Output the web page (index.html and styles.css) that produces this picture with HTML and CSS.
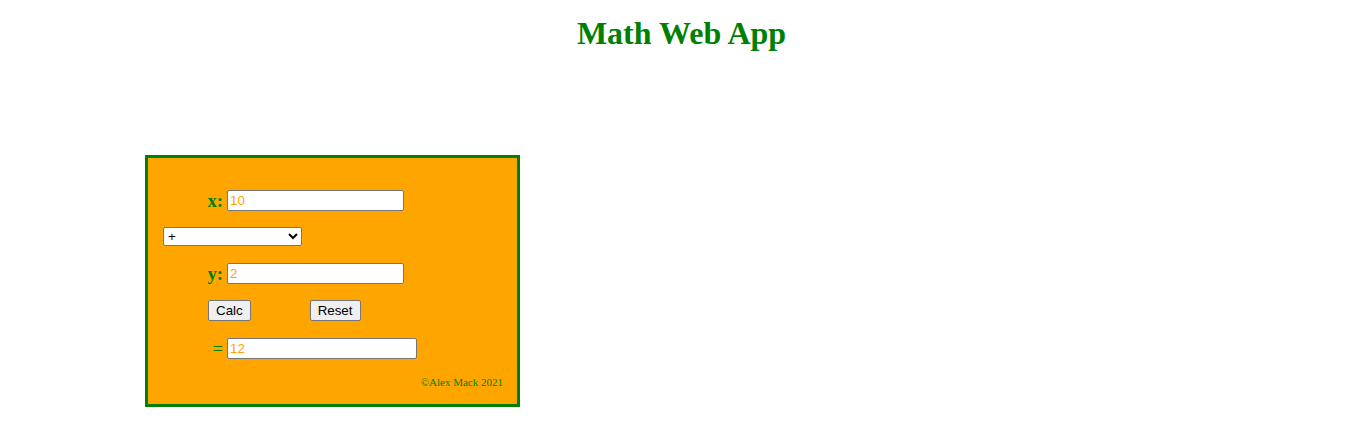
FILE: index.html
```html
<!DOCTYPE html>
<html lang="en">
<head>
  <meta charset="UTF-8">
  <title>Math Web App</title>
  <link rel="stylesheet" href="styles.css">
</head>
<body>

  <h1>Math Web App</h1>

  <div class="calc">
    <div class="fila">
      <label class="etiqueta" for="x">x:</label>
      <input type="text" id="x" class="campo" value="10">
    </div>

    <div class="fila fila-op">
      <select id="op" class="operacion">
        <option>+</option>
        <option>-</option>
        <option>*</option>
        <option>/</option>
      </select>
    </div>

    <div class="fila">
      <label class="etiqueta" for="y">y:</label>
      <input type="text" id="y" class="campo" value="2">
    </div>

    <div class="fila fila-botones">
      <button id="calc">Calc</button>
      <button id="reset">Reset</button>
    </div>

    <div class="fila fila-res">
      <label class="etiqueta igual" for="res">=</label>
      <input type="text" id="res" class="campo resultado" value="12">
    </div>

    <p class="copy">&copy;Alex Mack 2021</p>
  </div>

  <script>
    const x = document.getElementById("x");
    const y = document.getElementById("y");
    const op = document.getElementById("op");
    const res = document.getElementById("res");

    document.getElementById("calc").addEventListener("click", () => {
      const a = parseFloat(x.value);
      const b = parseFloat(y.value);
      let r = 0;
      if (op.value === "+") r = a + b;
      if (op.value === "-") r = a - b;
      if (op.value === "*") r = a * b;
      if (op.value === "/") r = a / b;
      res.value = r;
    });

    document.getElementById("reset").addEventListener("click", () => {
      x.value = "";
      y.value = "";
      res.value = "";
    });
  </script>

</body>
</html>
```

FILE: styles.css
```css
body {
  margin: 0;
  font-family: "Liberation Serif", "Times New Roman", serif;
  background: #ffffff;
}

h1 {
  margin: 15px 0 0;
  line-height: 37px;
  font-size: 32px;
  text-align: center;
  color: #008000;
}

.calc {
  width: 369px;
  margin: 103px 0 0 145px;
  padding: 32px 0 15px;
  border: 3px solid #008000;
  background: #ffa500;
  display: flex;
  flex-direction: column;
  gap: 16px;
}

.fila {
  height: 21px;
  display: flex;
  align-items: center;
  gap: 4px;
}

.etiqueta {
  width: 75px;
  text-align: right;
  font-size: 18.72px;
  font-weight: bold;
  line-height: 19px;
  color: #008000;
}

.igual {
  font-weight: normal;
}

.campo {
  width: 177px;
  height: 21px;
  box-sizing: border-box;
  padding: 1px 2px;
  border: 1px solid #767676;
  border-radius: 2px;
  font-family: "Liberation Sans", Arial, sans-serif;
  font-size: 13.333px;
  color: #ffa500;
  background: #ffffff;
}

.resultado {
  width: 190px;
}

.fila-op {
  padding-left: 15px;
  height: 20px;
  align-items: flex-start;
}

.operacion {
  width: 139px;
  height: 19px;
  font-family: "Liberation Sans", Arial, sans-serif;
  font-size: 13.333px;
  color: #000000;
  background: #ffffff;
  border: 1px solid #767676;
  border-radius: 2px;
}

.fila-botones {
  padding-left: 60px;
  gap: 59px;
}

.fila-res {
  margin-top: 1px;
}

button {
  height: 21px;
  padding: 1px 7px;
  font-family: "Liberation Sans", Arial, sans-serif;
  font-size: 13.333px;
  color: #000000;
  background: #efefef;
  border: 1px solid #767676;
  border-radius: 2px;
}

.copy {
  margin: 1px 14px 0 0;
  text-align: right;
  font-size: 11px;
  line-height: 13px;
  color: #008000;
}
```
